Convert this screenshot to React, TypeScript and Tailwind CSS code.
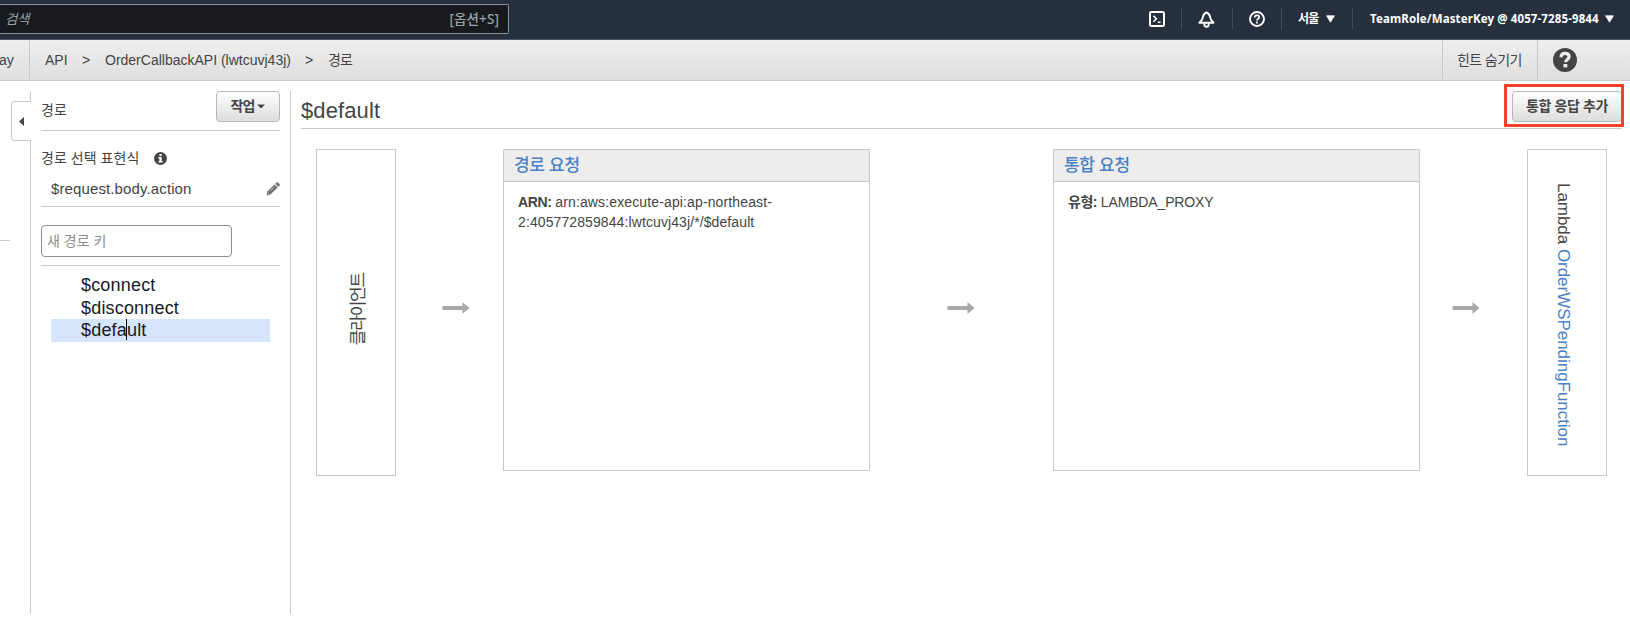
import type { ReactNode } from "react";

const routes = ["$connect", "$disconnect", "$default"];
const selectedRoute = "$default";

function NavItem({ className, children }: { className: string; children: ReactNode }) {
  return <div className={`flex h-[22px] shrink-0 items-center ${className}`}>{children}</div>;
}

function Caret() {
  return (
    <svg width="9" height="8" viewBox="0 0 9 8" className="shrink-0 fill-white">
      <path d="M0.6 0.8h7.8L4.5 7.2z" stroke="#fff" strokeWidth="0.8" strokeLinejoin="round" />
    </svg>
  );
}

function TopBar() {
  return (
    <header className="flex h-10 shrink-0 border-b border-[#4a5463] bg-[#252f3e] font-['Noto_Sans','Noto_Sans_CJK_KR',sans-serif] text-white">
      <div className="mt-1 flex h-[30px] w-[509px] shrink-0 items-center justify-between rounded-r-[2px] border border-l-0 border-[#879596] bg-[#17191f] pr-[9px] pl-[5px] text-[#95a5a6]">
        <span className="text-[13.5px] tracking-[-0.3px] italic">검색</span>
        <span className="text-[13.5px] font-medium tracking-[0.1px]">[옵션+S]</span>
      </div>
      <div className="ml-auto flex pt-2">
        <NavItem className="pr-4">
          <svg width="16" height="16" viewBox="0 0 16 16" fill="none" stroke="#fff" strokeWidth="2">
            <rect x="1" y="1" width="14" height="14" rx="1.5" />
            <path d="M4.4 4.8 7.4 7.8l-3 3M8.8 11.2h2.8" strokeWidth="1.6" />
          </svg>
        </NavItem>
        <NavItem className="border-l border-[#414b59] pr-[17px] pl-4">
          <svg width="17" height="17" viewBox="0 0 17 17" fill="none" stroke="#fff" strokeWidth="1.9" strokeLinejoin="round">
            <path d="M8.5 1.5C6.2 2.4 5 4.4 4.6 7.2 4.3 9 3.1 10.2 1.4 11.8h14.2c-1.7-1.6-2.9-2.8-3.2-4.6-.4-2.8-1.6-4.8-3.9-5.7z" />
            <path d="M6.3 12.2v1.4a2.2 2.2 0 0 0 4.4 0v-1.4" />
          </svg>
        </NavItem>
        <NavItem className="border-l border-[#414b59] px-4">
          <svg width="16" height="16" viewBox="0 0 16 16" fill="none" stroke="#fff" strokeWidth="1.9">
            <circle cx="8" cy="8" r="7" />
            <path d="M5.7 6.6C5.7 5 6.6 4.3 8 4.3s2.3.8 2.3 2c0 1.5-2.3 1.5-2.3 3.2M8 10.6v1.8" strokeWidth="1.7" />
          </svg>
        </NavItem>
        <NavItem className="w-[71px] gap-[6px] border-l border-[#414b59] pl-4">
          <span className="w-[22px] text-[12px] font-bold tracking-[-0.8px] whitespace-nowrap">서울</span>
          <Caret />
        </NavItem>
        <NavItem className="w-[278px] gap-[5px] border-l border-[#414b59] pl-[17px]">
          <span className="w-[230px] text-[11.5px] font-bold tracking-[0.12px] whitespace-nowrap">TeamRole/MasterKey @ 4057-7285-9844</span>
          <Caret />
        </NavItem>
      </div>
    </header>
  );
}

function Breadcrumbs() {
  return (
    <nav className="flex h-[41px] shrink-0 items-stretch border-b border-[#ccc] bg-linear-to-b from-[#eeeeee] to-[#dfdfdf] text-[14px] leading-[40px] whitespace-nowrap">
      <div className="w-[30px] shrink-0 border-r border-[#c8c8c8]">
        <span className="-ml-px">ay</span>
      </div>
      <div className="flex pl-[15px]">
        <span className="w-[37px]">API</span>
        <span className="w-[23px]">&gt;</span>
        <span className="w-[200px]">OrderCallbackAPI (lwtcuvj43j)</span>
        <span className="w-[23px]">&gt;</span>
        <span className="tracking-[-0.9px]">경로</span>
      </div>
      <div className="ml-auto w-[96px] border-x border-[#c8c8c8] pl-[14px] tracking-[-0.6px]">힌트 숨기기</div>
      <div className="flex w-[92px] items-center pl-[15px]">
        <svg width="24" height="24" viewBox="0 0 24 24">
          <circle cx="12" cy="12" r="12" fill="#444" />
          <path d="M8 9.3C8.2 6.8 9.8 5.4 12.1 5.4c2.3 0 4 1.3 4 3.4 0 2.6-3.4 2.7-3.6 5.4" fill="none" stroke="#eee" strokeWidth="3.2" />
          <path d="M10.5 16h3.8v3.4h-3.8z" fill="#eee" />
        </svg>
      </div>
    </nav>
  );
}

function AwsButton({ className, children }: { className: string; children: ReactNode }) {
  return (
    <button className={`flex h-[31px] items-center justify-center rounded-[4px] border border-[#b8b8b8] bg-linear-to-b from-white to-[#dddddd] text-[14px] font-bold whitespace-nowrap text-[#444] ${className}`}>
      {children}
    </button>
  );
}

function CollapseRail() {
  return (
    <div className="flex w-[31px] shrink-0 flex-col">
      <div className="h-[10px] border-r border-[#c8c8c8]" />
      <div className="ml-[11px] flex h-10 items-center rounded-l-[4px] border border-r-0 border-[#c8c8c8] pl-[7px]">
        <svg width="5" height="9" viewBox="0 0 5 9">
          <path d="M5 0v9L0 4.5z" fill="#444" />
        </svg>
      </div>
      <div className="flex-1 border-r border-[#c8c8c8] pt-[99px]">
        <div className="h-px w-[10px] bg-[#ccc]" />
      </div>
    </div>
  );
}

function Sidebar() {
  return (
    <aside className="flex w-[260px] shrink-0 flex-col border-r border-[#c8c8c8] pr-[10px] pl-[10px]">
      <div className="flex h-10 items-start justify-between border-b border-[#c8c8c8]">
        <span className="pt-[9px] text-[14px] leading-5">경로</span>
        <AwsButton className="w-16">
          <span className="tracking-[-0.9px]">작업</span>
          <svg width="8" height="5" viewBox="0 0 8 5" className="ml-[3px]">
            <path d="M0 0.5h8L4 4.5z" fill="#444" />
          </svg>
        </AwsButton>
      </div>
      <div className="flex h-[76px] flex-col border-b border-[#c8c8c8] pt-[17px]">
        <div className="flex items-center">
          <span className="w-[113px] text-[14px] leading-5 tracking-[0.05px]">경로 선택 표현식</span>
          <svg width="13" height="13" viewBox="0 0 13 13">
            <circle cx="6.5" cy="6.5" r="6.5" fill="#444" />
            <path d="M5.4 2h2.3v1.9H5.4zM4.5 5h3.2v4h.9v1.5H4.5V9h.9V6.4h-.9z" fill="#fff" />
          </svg>
        </div>
        <div className="mt-[11px] flex items-center justify-between pl-[10px]">
          <span className="text-[15px] leading-5 tracking-[0.12px]">$request.body.action</span>
          <svg width="14" height="14" viewBox="0 0 14 14" fill="#6b6b6b">
            <path d="M0.5 13.5 1.4 9.6 8.6 2.4 11.6 5.4 4.4 12.6z" />
            <path d="M9.3 1.7 10.5.5q.7-.5 1.4 0l1.6 1.6q.5.7 0 1.4l-1.2 1.2z" />
            <path d="M4 9.3 8.6 4.7" stroke="#fff" strokeWidth="0.6" />
            <path d="M1.6 11l1.4 1.4" stroke="#fff" strokeWidth="0.8" />
          </svg>
        </div>
      </div>
      <div className="flex h-[59px] items-start border-b border-[#c8c8c8] pt-[18px]">
        <input
          className="h-8 w-[191px] rounded-[4px] border border-[#8c8c8c] px-[5px] text-[14px] placeholder:text-[#8c8c8c]"
          placeholder="새 경로 키"
        />
      </div>
      <ul className="mx-[10px] mt-[7px] text-[18px] tracking-[0.18px] text-[#16191f]">
        {routes.map((route) => (
          <li
            key={route}
            className={`relative h-[23px] pl-[30px] ${route === selectedRoute ? "bg-[#d5e6fc] leading-[23px]" : "leading-[25px]"}`}
          >
            {route}
            {route === selectedRoute && <span className="absolute top-0 left-[75px] h-[21px] w-px bg-black" />}
          </li>
        ))}
      </ul>
    </aside>
  );
}

function FlowArrow({ className }: { className: string }) {
  return (
    <svg width="28" height="12" viewBox="0 0 28 12" className={`mt-[153px] shrink-0 ${className}`}>
      <path d="M0.5 4h20V0l7 6-7 6V8h-20z" fill="#a8a8a8" />
    </svg>
  );
}

function StageCard({ title, children }: { title: string; children: ReactNode }) {
  return (
    <section className="h-[322px] w-[367px] shrink-0 border border-[#c8c8c8]">
      <h2 className="box-content h-[31px] border-b border-[#c8c8c8] bg-[#ededed] pl-[10px] text-[17px] leading-[31px] font-medium tracking-[-0.3px] text-[#4a80c4]">{title}</h2>
      <div className="px-[14px] pt-[10px] text-[14px] leading-5">{children}</div>
    </section>
  );
}

function Endpoint({ className, children }: { className: string; children: ReactNode }) {
  return (
    <div className={`flex h-[327px] w-20 shrink-0 items-center justify-center border border-[#c8c8c8] text-[17px] whitespace-nowrap ${className}`}>{children}</div>
  );
}

function RoutePanel() {
  return (
    <main className="flex-1 pl-[10px]">
      <div className="mr-2 flex h-[38px] items-start justify-between border-b border-[#c8c8c8]">
        <h1 className="pt-[6px] text-[22px] leading-7 tracking-[0.1px]">$default</h1>
        <div className="relative">
          <AwsButton className="w-[110px] tracking-[-0.4px]">통합 응답 추가</AwsButton>
          <div className="absolute -top-[7px] -left-2 h-[43px] w-[120px] border-3 border-[#f2432a]" />
        </div>
      </div>
      <div className="flex pt-5 pl-[15px]">
        <Endpoint className="pb-[6px] pl-[5px]">
          <span className="rotate-180 tracking-[-1.2px] [text-orientation:sideways] [writing-mode:vertical-rl]">클라이언트</span>
        </Endpoint>
        <FlowArrow className="mr-[33px] ml-[46px]" />
        <StageCard title="경로 요청">
          <b className="tracking-[-0.4px]">ARN:</b> <span className="tracking-[0.13px]">arn:aws:execute-api:ap-northeast-</span>
          <br />
          <span className="tracking-[0.1px]">2:405772859844:lwtcuvj43j/*/$default</span>
        </StageCard>
        <FlowArrow className="mr-[78px] ml-[77px]" />
        <StageCard title="통합 요청">
          <b className="tracking-[-0.5px]">유형:</b> <span className="tracking-[-0.15px]">LAMBDA_PROXY</span>
        </StageCard>
        <FlowArrow className="mr-[47px] ml-8" />
        <Endpoint className="pt-1 pr-[7px]">
          <span className="tracking-[-0.04px] [writing-mode:vertical-rl]">
            Lambda <a className="text-[#4a80c4]">OrderWSPendingFunction</a>
          </span>
        </Endpoint>
      </div>
    </main>
  );
}

export default function App() {
  return (
    <div className="flex h-[625px] w-[1630px] flex-col overflow-hidden bg-white font-['Liberation_Sans','Noto_Sans_CJK_KR',sans-serif] text-[#444]">
      <TopBar />
      <Breadcrumbs />
      <div className="mt-[10px] mb-[11px] flex min-h-0 flex-1">
        <CollapseRail />
        <Sidebar />
        <RoutePanel />
      </div>
    </div>
  );
}
